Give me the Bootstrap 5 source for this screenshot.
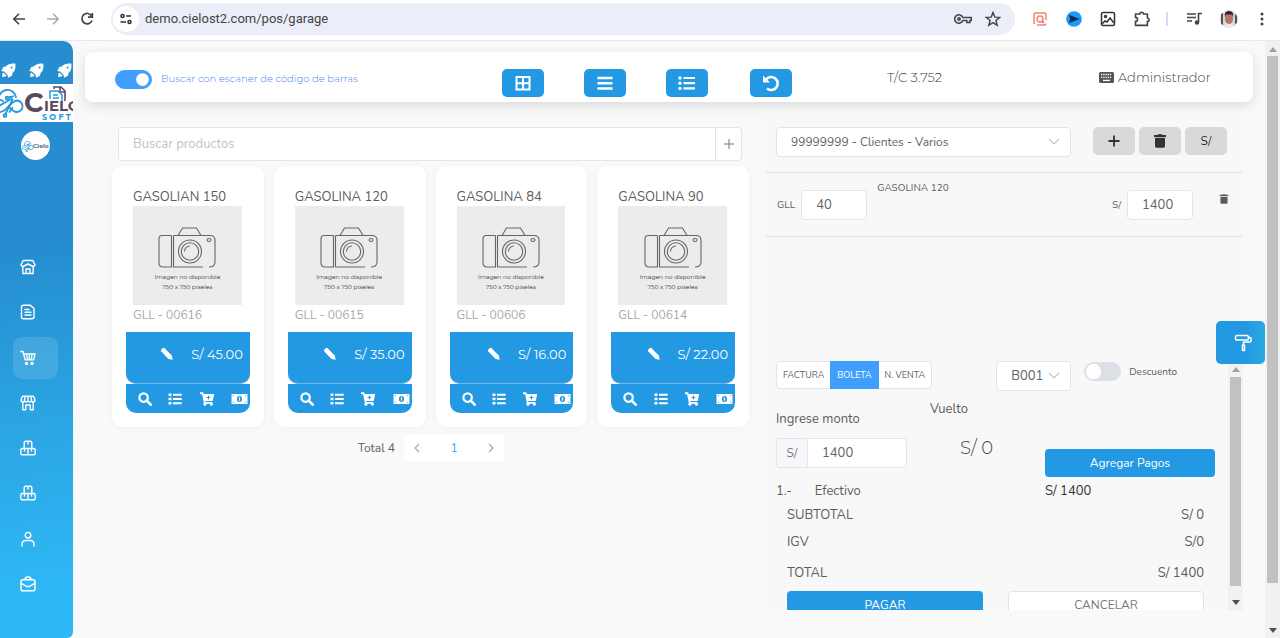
<!DOCTYPE html>
<html lang="es">
<head>
<meta charset="utf-8">
<meta name="viewport" content="width=device-width, initial-scale=1">
<title>POS Garage</title>
<link href="https://cdn.jsdelivr.net/npm/bootstrap@5.3.0/dist/css/bootstrap.min.css" rel="stylesheet">
<style>
:root{--blue:#2398e3;--line:#e2e4e9;--ink:#606266;--geo:Montserrat,Inter,sans-serif}
body{font-family:Nunito,"Open Sans",sans-serif;font-size:13px;line-height:18px;color:#5c5c5c;background:#f9f9f9;height:100vh;overflow:hidden}
svg{display:block;flex:none}
button{font-family:inherit}
.i16{width:16px;height:16px}.i14{width:14px;height:14px}
.line-ic{fill:none;stroke:currentColor;stroke-width:1.4;stroke-linecap:round;stroke-linejoin:round}
.plain{border:0;background:none;padding:0;color:inherit;display:flex;align-items:center;justify-content:center}

/* browser bar */
.chrome-bar{height:41px;padding:3px 12px 6px 12px;border-bottom:1px solid #e9e9e9;background:#fff;color:#444}
.nav-keys{width:99px;gap:20px}
.omni{background:#ebeef8;border-radius:16px;height:32px;padding:0 14px 0 2px}
.site-info{width:26px;height:26px;border-radius:50%;background:#fff}
.omni input{border:0;background:none;font:13px/18px Roboto,sans-serif;color:#444;outline:0;padding:0;min-width:0;margin-left:6px}
.omni .fav{margin-left:13px}
.ext{gap:14px;padding-left:17px}
.ext-sep{width:2px;height:14px;margin-left:2px;background:#cfdcf8}
.ext .face{margin-left:4px}
.ext .dots{margin:0 4px 0 8px}

/* sidebar */
.side{width:73px;overflow:hidden;border-top-right-radius:10px;border-bottom-right-radius:6px;color:#fff;background:linear-gradient(172deg,#258dd0 0%,#258dd0 35%,#2ba5e3 64%,#2fb8f6 92%);flex:none}
.rockets{height:43px;gap:13px;padding-top:15px}
.rockets svg{width:15px;height:15px}
.brand{height:38px;background:#fff;overflow:hidden}
.brand text,.avatar-mini text{font-family:Montserrat,Inter,sans-serif;font-weight:700}
.avatar-mini{width:29px;height:29px;border-radius:50%;background:#fff;margin:9px 0 0 21px}
.side-nav{margin:86px 15px 33px 13px}
.side-nav a{height:42px;border-radius:9px;padding-left:7px;color:#fff;display:flex;align-items:center}
.side-nav a.active{background:rgba(255,255,255,.13)}

/* header card */
.top-card{height:50px;margin:11px 12px 0 12px;padding:0 30px;background:#fff;border-radius:8px;box-shadow:0 4px 12px rgba(0,0,0,.12);display:grid;grid-template-columns:387fr 82fr 82fr 84fr 137fr 212fr 124fr;align-items:center;font-family:var(--geo);font-weight:300}
.top-card .tool{width:42px;height:28px;margin-top:11px;border-radius:5px;background:var(--blue);color:#fff}
.top-text{font-size:13px;white-space:nowrap;color:#444}
.sw.form-check-input{width:37px;height:19px;margin:0;border-color:#dcdfe6;background-color:#dcdfe6;--bs-form-switch-bg:url("data:image/svg+xml,%3csvg xmlns='http://www.w3.org/2000/svg' viewBox='-4 -4 8 8'%3e%3ccircle r='3.6' fill='%23fff'/%3e%3c/svg%3e");flex:none;float:none;box-shadow:none}
.sw.form-check-input:checked{background-color:#409eff;border-color:#409eff}
.scan{font-size:10px;color:#4f86f0;white-space:nowrap;padding-left:1px}

/* work area */
.work{display:grid;grid-template-columns:637fr 478fr;gap:16px;padding:9px 22px 0 39px}
.finder{height:34px;margin:16px 7px 5px 6px;border:1px solid var(--line);border-radius:4px;background:#fff;overflow:hidden}
.finder input{border:0;outline:0;padding:0 14px;font-size:13px;color:#555;min-width:0}
.finder input::placeholder{color:#bfc2c9}
.finder button{width:26px;color:#777}
.goods{display:grid;grid-template-columns:repeat(4,1fr);gap:10px}
.good{background:#fff;border-radius:10px;padding:22px 14px 14px;box-shadow:0 1px 6px rgba(0,0,0,.04)}
.good h2{font-size:13px;line-height:18px;font-weight:400;margin:0 0 0 7px;white-space:nowrap}
.photo{height:99px;margin:0 8px 0 7px;background:#ececec;padding-top:20px;color:#333}
.photo svg{width:58px;height:43px;margin:0 auto}
.photo figcaption{font:400 6px/10px var(--geo);text-align:center;padding-top:3px;white-space:nowrap}
.sku{font-size:12px;line-height:18px;color:#a8a8a8;margin:1px 0 8px 7px}
.price{height:52px;background:var(--blue);border-radius:0 0 10px 10px;color:#fff;padding:0 7px 8px 0;gap:17px;font:400 13px/18px var(--geo);border-bottom:1px solid #6db9eb}
.acts{height:29px;background:var(--blue);border-radius:0 0 10px 10px;color:#fff;padding:0 2px 0 12px}
.pager{margin-top:8px;padding-right:245px;font-size:12px;color:var(--ink)}
.pager .pages{background:#fff;height:26px;width:100px;margin-left:9px}
.pager a{text-decoration:none;color:#409eff}
.pager button{color:#b0b3ba;width:26px;height:26px}

/* sale panel */
.sale{background:#f8f8f8;color:#5c5c5c}
.box{background:#fff;border:1px solid var(--line);border-radius:4px;color:var(--ink);height:30px;font-size:13px;outline:0;padding:0 14px}
select.box{appearance:none;background:#fff url("data:image/svg+xml,%3csvg xmlns='http://www.w3.org/2000/svg' width='12' height='8'%3e%3cpath d='M1 1l5 5 5-5' fill='none' stroke='%23c0c4cc' stroke-width='1.2'/%3e%3c/svg%3e") no-repeat right 10px center}
.customer{padding:16px 16px 15px 11px;border-bottom:1px solid #dfdfdf}
.customer select{font-size:12px;margin-right:18px}
.customer button{height:28px;width:42px;border-radius:5px;background:#d9d9d9;color:#333;font-size:12px}
.item{height:64px;padding:0 14px 0 12px;border-bottom:1px solid #dfdfdf;font-size:10px}
.item label{margin-right:6px}
.item .box{width:66px}
.item .name{align-self:flex-start;padding-top:6px;margin-left:10px}
.item .drop{margin:0 0 12px 26px}
.pay{height:249px;margin-top:124px;overflow:hidden}
.pay-body{padding-left:11px;min-width:0}
.docs .btn{height:28px;border:1px solid var(--line);border-radius:4px;background:#fff;color:var(--ink);font-size:9px;line-height:26px;padding:0 6px}
.docs .btn-check:checked+.btn{background:#409eff;border-color:#409eff;color:#fff}
.serie{width:75px}
.desc{margin:1px 51px 0 13px;font-size:10px}
.cash{display:grid;grid-template-columns:154fr 115fr 170fr;margin-right:13px}
.cash-label{display:block;margin:19px 0 10px}
.prefix{width:31px;height:30px;border:1px solid var(--line);border-right:0;border-radius:4px 0 0 4px;background:#f5f7fa;font-size:12px;color:#777}
.cash .box{width:100px;border-radius:0 4px 4px 0}
.vuelto{padding-top:9px}
.change{font-family:var(--geo);font-weight:300;font-size:18px;line-height:24px;margin-top:18px;padding-left:30px;color:#444}
.solid{background:var(--blue);color:#fff;border-radius:4px;font-size:12px}
.add{height:28px;margin-top:58px}
.paid{margin-top:5px}
.paid span{margin-left:23px}
.total-paid{color:#333}
.sums{margin:0 24px 0 11px}
.sub{margin-top:6px}.igv{margin-top:9px}.tot{margin:13px 0 9px}
.sums .solid,.sums .cancel{height:28px;width:47%}
.sums .cancel{background:#fff;border:1px solid var(--line);border-radius:4px;font-size:12px;color:#777}
.sbar{background:#f1f1f1;width:15px;flex:none;padding:6px 1px 5px}
.sbar i{width:11px;background:#c1c1c1;display:block}
.tri{width:0;height:0;border:4px solid transparent;border-top:0;border-bottom:5px solid #a0a0a0}
.tri.down{border-top:5px solid #505050;border-bottom:0}
.inner .tri.down{margin-top:14px}.inner i{margin-top:5px}
.outer i{margin-top:4px;height:90%}
.paint{position:absolute;right:0;top:280px;width:49px;height:43px;border-radius:5px;background:linear-gradient(90deg,#2398e3 60%,#2ba9e0);color:#fff;padding-left:4px}
</style>
</head>
<body class="d-flex flex-column">
<svg width="0" height="0" class="position-absolute" aria-hidden="true">
<symbol id="rocket" viewBox="0 0 16 16"><path fill="currentColor" d="M15.300.700C11 .2 7.500 1 5.500 3.500L2.500 4.200.300 8.500l3 .5 3.700 3.700.5 3 4.200-2.200.8-3C15 8.500 15.800 5 15.300.700zM2.500 10 1.500 11.500l-.3 3.300 3.300-.3L6 13.500z"/><circle cx="11.300" cy="4.700" r="1.100" fill="#258dd0"/></symbol>
<symbol id="cloud" viewBox="-6 0 32 32"><g fill="none" stroke="#2498dc" stroke-width="1.800" stroke-linecap="round"><path d="M-1 14A8.500 8.500 0 1 1 16 11"/><path d="M3 15A6 6 0 1 0 3 25C7 24 11 15 17 14.500A5.700 5.700 0 1 1 16.500 26C13 26 11 23 9 21"/><path d="M-1 20 11 13M12.500 13.500 5.500 28M8.500 11.500l4.500-1M9.500 26l3-4"/><circle cx="5" cy="29.500" r="1.400"/><circle cx="7" cy="12" r="1.400"/></g></symbol>
<symbol id="camera" viewBox="0 0 58 43"><g fill="none" stroke="#666" stroke-width="1.100"><path d="M13.500 9.500H4Q1 9.500 1 13v24q0 4 4 4h8.500V9.500M15.500 9.500V41H45M15.500 9.500H52q5 0 5 5V36q0 5-6 5M20 9.500 24.500 2h14L43 9.500"/><circle cx="32" cy="25.500" r="11.500"/><circle cx="32" cy="25.500" r="8.700"/><path d="M26.500 25.500a5.500 5.500 0 0 1 5.500-5.500"/><ellipse cx="51" cy="14" rx="2" ry="1.500"/></g></symbol>
<symbol id="pencil" viewBox="0 0 14 14"><path fill="currentColor" d="M1.400 2.500 2.700 1.200q1-.8 1.900.1l7.200 7.300.9 4.200-4.200-.9L1.300 4.500q-.9-1 .1-2z"/></symbol>
<symbol id="search" viewBox="0 0 14 14"><circle cx="5.600" cy="5.600" r="4.200" fill="none" stroke="currentColor" stroke-width="2.200"/><path d="m8.700 8.700 4 4" stroke="currentColor" stroke-width="2.600" stroke-linecap="round"/></symbol>
<symbol id="list" viewBox="0 0 14 14"><path fill="currentColor" d="M.5 1.500h3v2.500h-3zM.5 5.800h3v2.500h-3zM.5 10h3v2.500h-3zM5 1.800h8.700v1.900H5zM5 6.100h8.700V8H5zM5 10.300h8.700v1.900H5z"/></symbol>
<symbol id="cartplus" viewBox="0 0 16 14"><path fill="currentColor" d="M1 .3h3.200l.5 1.700H15.200L13.700 9H6.200l.2 1.100h7v1a1.500 1.500 0 1 1-2.400.7H7.500A1.600 1.600 0 1 1 4.900 11L3.100 2.300H1z"/><path d="M9.500 3.600v3.800M7.600 5.500h3.800" stroke="#2398e3" stroke-width="1"/></symbol>
<symbol id="money" viewBox="0 0 17 12"><path fill="currentColor" d="M.5 1h16v10H.5z"/><ellipse cx="8.500" cy="6" rx="2.600" ry="3" fill="#2398e3"/><path d="M8.500 4.300v3.400" stroke="#fff" stroke-width="1.200"/><path fill="#2398e3" d="M1.800 2.300h1v1h-1zM14.200 2.300h1v1h-1zM1.800 8.700h1v1h-1zM14.200 8.700h1v1h-1z"/></symbol>
<symbol id="trash" viewBox="0 0 14 14"><path fill="currentColor" d="M5 .2h4l.6.900H13v1.800H1V1.100h3.400zM2 3.800h10V12q0 1.700-1.500 1.700h-7Q2 13.700 2 12z"/></symbol>
<symbol id="boxes" viewBox="0 0 16 16"><path d="M2.200 8.500H8v6.300H2.200q-1.400 0-1.400-1.400V9.900q0-1.400 1.400-1.400zM8 8.500h5.800q1.400 0 1.400 1.400v3.500q0 1.400-1.400 1.400H8zM4.200 8.300V2.600q0-1.400 1.400-1.400h4.800q1.400 0 1.400 1.400v5.700M8 1.500V4M4.500 8.700V11M11.500 8.700V11"/></symbol>
</svg>

<header class="chrome-bar d-flex align-items-start">
  <div class="nav-keys d-flex align-items-center h-100 flex-shrink-0">
    <button class="plain" aria-label="Atrás"><svg class="i14" viewBox="0 0 14 14"><path d="M13 7H2M7 1.800 1.800 7 7 12.200" fill="none" stroke="#444" stroke-width="1.600"/></svg></button>
    <button class="plain" aria-label="Adelante"><svg class="i14" viewBox="0 0 14 14"><path d="M1 7h11M7 1.800 12.200 7 7 12.200" fill="none" stroke="#aaa" stroke-width="1.600"/></svg></button>
    <button class="plain" aria-label="Recargar"><svg class="i14" viewBox="0 0 14 14"><path d="M12 8.500A5.200 5.200 0 1 1 11.600 4M12.300 1v4.200H8" fill="none" stroke="#444" stroke-width="1.700"/></svg></button>
  </div>
  <div class="omni d-flex align-items-center flex-grow-1">
    <span class="site-info d-flex align-items-center justify-content-center"><svg class="i14" viewBox="0 0 14 14" fill="none" stroke="#333" stroke-width="1.600"><circle cx="3.500" cy="4" r="1.500"/><path d="M7 4h5M1.500 10H7"/><circle cx="10.500" cy="10" r="1.500"/></svg></span>
    <input class="flex-grow-1" type="text" value="demo.cielost2.com/pos/garage" aria-label="Dirección">
    <svg width="18" height="12" viewBox="0 0 18 12" fill="none" stroke="#444" stroke-width="1.500"><path d="M8.800 4.500h8.500v3h-1.500v2h-3v-2h-4A4.200 4.200 0 1 1 8.800 4.500z"/><circle cx="5" cy="6" r="1.200"/></svg>
    <svg class="i16 fav" viewBox="0 0 16 16"><path d="m8 1.500 1.800 4.600 4.900.3-3.800 3.100 1.300 4.800L8 11.600l-4.200 2.700 1.300-4.800L1.300 6.400l4.900-.3z" fill="none" stroke="#444" stroke-width="1.400"/></svg>
  </div>
  <div class="ext d-flex align-items-center h-100">
    <svg class="i16 me-1" viewBox="0 0 16 16" fill="none" stroke="#f5836f" stroke-width="1.500"><path d="M2 13V3.500Q2 2 3.500 2h9Q14 2 14 3.500V9M5 14h7.500q1.500 0 1.500-1.500"/><circle cx="8" cy="8" r="3"/><path d="m10 10 2 2" stroke="#f05089"/></svg>
    <svg class="i16 me-1" viewBox="0 0 16 16"><circle cx="8" cy="8" r="7.800" fill="#199aff"/><path d="M3 3.700 13.500 8 3 12l1.200-4z" fill="#0d2c4b"/></svg>
    <svg class="i16 me-1" viewBox="0 0 16 16" fill="none" stroke="#333" stroke-width="1.500"><rect x="1.500" y="1.500" width="13" height="13" rx="1.500"/><circle cx="5.500" cy="5.500" r="1"/><path d="m2 13 3-3 2 1 3-4 4 5"/></svg>
    <svg class="i16" viewBox="0 0 16 16" fill="none" stroke="#444" stroke-width="1.600"><path d="M1.500 3H6a1.700 1.700 0 0 1 3.400 0h4v4a1.700 1.700 0 0 1 0 3.400v4H1.500v-4a2 2 0 0 0 0-4z"/></svg>
    <span class="ext-sep"></span>
    <svg class="i16 ms-1" viewBox="0 0 16 16" fill="none" stroke="#444" stroke-width="1.600"><path d="M1 3h9M1 6.500h9M1 10h5M12.500 11V2.500H16"/><circle cx="11" cy="11.500" r="1.500" fill="#444"/></svg>
    <svg class="face" width="18" height="18" viewBox="0 0 18 18"><circle cx="9" cy="9" r="9" fill="#d3d8df"/><path d="M1 14V4l2-1v12zM15 14V4l2 2v7z" fill="#555"/><path d="M4.500 16.500Q9 20 13.500 16.500L12 13H6z" fill="#e9e9ef"/><ellipse cx="9" cy="8.500" rx="4" ry="5.500" fill="#b87563"/><path d="M4.800 7Q4 1 9 1t4.200 6L12 4.500H6z" fill="#2c2424"/></svg>
    <svg class="dots" width="4" height="14" viewBox="0 0 4 14" fill="#444"><circle cx="2" cy="2" r="1.500"/><circle cx="2" cy="7" r="1.500"/><circle cx="2" cy="12" r="1.500"/></svg>
  </div>
</header>

<div class="d-flex flex-grow-1 overflow-hidden">
  <aside class="side d-flex flex-column">
    <div class="rockets d-flex align-items-center justify-content-center flex-shrink-0">
      <svg><use href="#rocket"/></svg><svg><use href="#rocket"/></svg><svg><use href="#rocket"/></svg>
    </div>
    <div class="brand flex-shrink-0">
      <svg width="90" height="38" viewBox="0 0 90 38" role="img" aria-label="Cielo Soft"><svg x="-6" y="2" width="32" height="32"><use href="#cloud"/></svg><path d="M54 5V3h7l4 4v10M60 3v5h5" fill="none" stroke="#5b4a5e" stroke-width="1.600"/><path d="M50 15V7h8l4 4v7M53 11h5M53 14h6" fill="none" stroke="#2498dc" stroke-width="1.500"/><text x="24" y="28" font-size="27" fill="#5b4a5e">C</text><text x="44" y="27" font-size="15" fill="#5b4a5e">IELO</text><text x="42" y="36" font-size="8" fill="#2498dc">S O F T</text></svg>
    </div>
    <div class="avatar-mini flex-shrink-0"><svg width="29" height="29" viewBox="0 0 29 29"><svg x="1" y="9" width="13" height="12"><use href="#cloud"/></svg><text x="12" y="17" font-size="6" fill="#5b6a7e">Cielo</text></svg></div>
    <nav class="side-nav d-flex flex-column justify-content-between flex-grow-1">
      <a href="#" aria-label="Inicio"><svg class="i16 line-ic" viewBox="0 0 16 16"><path d="M3.200 1.500h9.600L15 6q-.5 1.500-2 1.500L8 5 3 7.500Q1.500 7.500 1 6zM2.800 7.800v6.700h10.400V7.800M6 14.500V10h4v4.500"/></svg></a>
      <a href="#" aria-label="Documentos"><svg class="i16 line-ic" viewBox="0 0 16 16"><path d="M3.500 1.200h6.800L14 4.500v8.300q0 2-2 2H3.500q-2 0-2-2V3.200q0-2 2-2zM5 5.500h4M5 8.200h6M5 11h6"/></svg></a>
      <a href="#" class="active" aria-label="Ventas"><svg class="i16 line-ic" viewBox="0 0 16 16"><path d="M.8 1.500H3l2.200 8.300h8.300L15 4H3.900M6.800 5.500l.4 3M9.300 5.500v3M11.800 5.500l-.4 3"/><circle cx="6.500" cy="13.500" r="1"/><circle cx="12" cy="13.500" r="1"/></svg></a>
      <a href="#" aria-label="Tienda"><svg class="i16 line-ic" viewBox="0 0 16 16"><path d="M2.500 1.200h11L15 5q0 2-1.800 2-1.500 0-1.700-1.700Q11 7 9.500 7 8.200 7 8 5.500 7.800 7 6.500 7 5 7 4.500 5.300 4.300 7 2.800 7 1 7 1 5zM5 1.500l-.5 3.700M8 1.500v3.700M11 1.500l.5 3.700M2.800 7.200v7.600h3V10h4.400v4.800h3V7.200"/></svg></a>
      <a href="#" aria-label="Productos"><svg class="i16 line-ic"><use href="#boxes"/></svg></a>
      <a href="#" aria-label="Inventario"><svg class="i16 line-ic"><use href="#boxes"/></svg></a>
      <a href="#" aria-label="Usuarios"><svg class="i16 line-ic" viewBox="0 0 16 16"><circle cx="8" cy="4.200" r="2.800"/><path d="M2 15v-1.500q0-4 4-4h4q4 0 4 4V15"/></svg></a>
      <a href="#" aria-label="Caja"><svg class="i16 line-ic" viewBox="0 0 16 16"><path d="M2.800 3.700h10.400q1.800 0 1.800 1.800v7.700q0 1.600-1.600 1.600H2.600Q1 14.800 1 13.200V5.500q0-1.800 1.800-1.800zM5 3.600Q5 1 8 1t3 2.600M1.200 7.200 6.500 10.500h3l5.300-3.300"/></svg></a>
    </nav>
  </aside>

  <main class="flex-grow-1 position-relative overflow-hidden">
    <section class="top-card">
      <div class="form-switch d-flex align-items-center p-0 m-0 gap-2 pt-1">
        <input class="form-check-input sw" type="checkbox" role="switch" id="scan" checked>
        <label class="scan" for="scan">Buscar con escaner de código de barras</label>
      </div>
      <button class="plain tool" aria-label="Cuadrícula"><svg class="i16" viewBox="0 0 16 16" fill="none" stroke="#fff" stroke-width="2"><path d="M1.500 2h13v12.500h-13zM8 2v12.500M1.500 8.200h13"/></svg></button>
      <button class="plain tool" aria-label="Lista"><svg class="i16" viewBox="0 0 16 16"><path d="M.5 3h15M.5 8.200h15M.5 13.400h15" stroke="#fff" stroke-width="2.500"/></svg></button>
      <button class="plain tool" aria-label="Detalle"><svg width="18" height="16" viewBox="0 0 18 16" fill="#fff"><circle cx="2" cy="3" r="1.700"/><circle cx="2" cy="8.200" r="1.700"/><circle cx="2" cy="13.400" r="1.700"/><path d="M5.500 1.900H17v2.200H5.500zM5.500 7.100H17v2.200H5.500zM5.500 12.300H17v2.200H5.500z"/></svg></button>
      <button class="plain tool" aria-label="Deshacer"><svg width="18" height="18" viewBox="0 0 18 18"><path d="M4 5.500A6.500 6.500 0 1 1 5 14.500" fill="none" stroke="#fff" stroke-width="2.600"/><path d="M1 1.500v7h7z" fill="#fff"/></svg></button>
      <span class="top-text">T/C 3.752</span>
      <span class="top-text d-flex align-items-center gap-1"><svg width="15" height="11" viewBox="0 0 15 11"><rect width="15" height="11" rx="1.500" fill="#555"/><path d="M2 2.500h11M2 5.300h11" stroke="#fff" stroke-width="1.300" stroke-dasharray="1.300 .9"/><path d="M4 8.400h7" stroke="#fff" stroke-width="1.300"/></svg>Administrador</span>
    </section>

    <div class="work">
      <section>
        <div class="finder d-flex">
          <input class="flex-grow-1" type="text" placeholder="Buscar productos" aria-label="Buscar productos">
          <button class="plain border-start" aria-label="Agregar producto"><svg class="i14" viewBox="0 0 14 14"><path d="M7 2v10M2 7h10" stroke="#777" stroke-width="1"/></svg></button>
        </div>
        <div class="goods">
          <article class="good">
            <h2>GASOLIAN 150</h2>
            <figure class="photo"><svg><use href="#camera"/></svg><figcaption>Imagen no disponible<br>750 x 750 píxeles</figcaption></figure>
            <div class="sku">GLL - 00616</div>
            <div class="price d-flex align-items-center justify-content-end"><button class="plain" aria-label="Editar precio"><svg class="i14"><use href="#pencil"/></svg></button><span>S/ 45.00</span></div>
            <div class="acts d-flex align-items-center justify-content-between"><button class="plain" aria-label="Ver"><svg class="i14"><use href="#search"/></svg></button><button class="plain" aria-label="Detalle"><svg class="i14"><use href="#list"/></svg></button><button class="plain" aria-label="Agregar"><svg width="16" height="14"><use href="#cartplus"/></svg></button><button class="plain" aria-label="Precios"><svg width="17" height="12"><use href="#money"/></svg></button></div>
          </article>
          <article class="good">
            <h2>GASOLINA 120</h2>
            <figure class="photo"><svg><use href="#camera"/></svg><figcaption>Imagen no disponible<br>750 x 750 píxeles</figcaption></figure>
            <div class="sku">GLL - 00615</div>
            <div class="price d-flex align-items-center justify-content-end"><button class="plain" aria-label="Editar precio"><svg class="i14"><use href="#pencil"/></svg></button><span>S/ 35.00</span></div>
            <div class="acts d-flex align-items-center justify-content-between"><button class="plain" aria-label="Ver"><svg class="i14"><use href="#search"/></svg></button><button class="plain" aria-label="Detalle"><svg class="i14"><use href="#list"/></svg></button><button class="plain" aria-label="Agregar"><svg width="16" height="14"><use href="#cartplus"/></svg></button><button class="plain" aria-label="Precios"><svg width="17" height="12"><use href="#money"/></svg></button></div>
          </article>
          <article class="good">
            <h2>GASOLINA 84</h2>
            <figure class="photo"><svg><use href="#camera"/></svg><figcaption>Imagen no disponible<br>750 x 750 píxeles</figcaption></figure>
            <div class="sku">GLL - 00606</div>
            <div class="price d-flex align-items-center justify-content-end"><button class="plain" aria-label="Editar precio"><svg class="i14"><use href="#pencil"/></svg></button><span>S/ 16.00</span></div>
            <div class="acts d-flex align-items-center justify-content-between"><button class="plain" aria-label="Ver"><svg class="i14"><use href="#search"/></svg></button><button class="plain" aria-label="Detalle"><svg class="i14"><use href="#list"/></svg></button><button class="plain" aria-label="Agregar"><svg width="16" height="14"><use href="#cartplus"/></svg></button><button class="plain" aria-label="Precios"><svg width="17" height="12"><use href="#money"/></svg></button></div>
          </article>
          <article class="good">
            <h2>GASOLINA 90</h2>
            <figure class="photo"><svg><use href="#camera"/></svg><figcaption>Imagen no disponible<br>750 x 750 píxeles</figcaption></figure>
            <div class="sku">GLL - 00614</div>
            <div class="price d-flex align-items-center justify-content-end"><button class="plain" aria-label="Editar precio"><svg class="i14"><use href="#pencil"/></svg></button><span>S/ 22.00</span></div>
            <div class="acts d-flex align-items-center justify-content-between"><button class="plain" aria-label="Ver"><svg class="i14"><use href="#search"/></svg></button><button class="plain" aria-label="Detalle"><svg class="i14"><use href="#list"/></svg></button><button class="plain" aria-label="Agregar"><svg width="16" height="14"><use href="#cartplus"/></svg></button><button class="plain" aria-label="Precios"><svg width="17" height="12"><use href="#money"/></svg></button></div>
          </article>
        </div>
        <nav class="pager d-flex align-items-center justify-content-end" aria-label="Páginas">
          <span>Total 4</span>
          <div class="pages d-flex align-items-center justify-content-between">
            <button class="plain" aria-label="Anterior"><svg width="8" height="10" viewBox="0 0 8 10"><path d="M6 1 2 5l4 4" fill="none" stroke="currentColor" stroke-width="1.500"/></svg></button>
            <a href="#">1</a>
            <button class="plain" aria-label="Siguiente"><svg width="8" height="10" viewBox="0 0 8 10"><path d="m2 1 4 4-4 4" fill="none" stroke="currentColor" stroke-width="1.500"/></svg></button>
          </div>
        </nav>
      </section>

      <section class="sale">
        <div class="customer d-flex gap-1">
          <select class="box flex-grow-1" aria-label="Cliente"><option>99999999 - Clientes - Varios</option></select>
          <button class="plain" aria-label="Nuevo cliente"><svg class="i14" viewBox="0 0 14 14"><path d="M7 1.500v11M1.500 7h11" stroke="#333" stroke-width="1.800"/></svg></button>
          <button class="plain" aria-label="Vaciar"><svg class="i14"><use href="#trash"/></svg></button>
          <button class="plain">S/</button>
        </div>
        <div class="item d-flex align-items-center">
          <label for="qty">GLL</label>
          <input class="box" id="qty" type="text" value="40">
          <span class="name">GASOLINA 120</span>
          <label for="amount" class="ms-auto">S/</label>
          <input class="box" id="amount" type="text" value="1400">
          <button class="plain drop" aria-label="Quitar"><svg width="10" height="10"><use href="#trash"/></svg></button>
        </div>
        <div class="pay d-flex">
          <div class="pay-body flex-grow-1">
            <div class="d-flex align-items-start">
              <div class="docs btn-group" role="group" aria-label="Comprobante">
                <input class="btn-check" type="radio" name="doc" id="d1"><label class="btn" for="d1">FACTURA</label>
                <input class="btn-check" type="radio" name="doc" id="d2" checked><label class="btn" for="d2">BOLETA</label>
                <input class="btn-check" type="radio" name="doc" id="d3"><label class="btn" for="d3">N. VENTA</label>
              </div>
              <select class="box serie ms-auto" aria-label="Serie"><option>B001</option></select>
              <div class="form-switch desc d-flex align-items-center p-0 gap-2">
                <input class="form-check-input sw" type="checkbox" role="switch" id="disc"><label for="disc">Descuento</label>
              </div>
            </div>
            <div class="cash">
              <div>
                <label for="cashin" class="cash-label">Ingrese monto</label>
                <div class="d-flex"><span class="prefix d-flex align-items-center justify-content-center">S/</span><input class="box" id="cashin" type="text" value="1400"></div>
              </div>
              <div class="vuelto"><div>Vuelto</div><div class="change">S/ 0</div></div>
              <button class="plain solid add">Agregar Pagos</button>
              <div class="paid">1.-<span>Efectivo</span></div><div></div><div class="paid total-paid">S/ 1400</div>
            </div>
            <div class="sums">
              <div class="d-flex justify-content-between sub"><span>SUBTOTAL</span><span>S/ 0</span></div>
              <div class="d-flex justify-content-between igv"><span>IGV</span><span>S/0</span></div>
              <div class="d-flex justify-content-between tot"><span>TOTAL</span><span>S/ 1400</span></div>
              <div class="d-flex justify-content-between"><button class="plain solid">PAGAR</button><button class="plain cancel">CANCELAR</button></div>
            </div>
          </div>
          <div class="sbar d-flex flex-column align-items-center inner"><span class="tri"></span><i class="flex-grow-1"></i><span class="tri down"></span></div>
        </div>
      </section>
    </div>
    <button class="plain paint" aria-label="Tema"><svg width="18" height="18" viewBox="0 0 18 18" fill="none" stroke="#fff" stroke-width="1.500" stroke-linejoin="round"><rect x="1.500" y="1.500" width="13" height="4.500" rx="1.800"/><path d="M14.500 3.500H16q1 0 1 1V7q0 1-1 1H9.500v2.500"/><path d="M8.500 11h2v5.500h-2z"/></svg></button>
  </main>

  <div class="sbar d-flex flex-column align-items-center outer"><span class="tri"></span><i></i><span class="tri down mt-auto"></span></div>
</div>
<script src="https://cdn.jsdelivr.net/npm/bootstrap@5.3.0/dist/js/bootstrap.bundle.min.js"></script>
</body>
</html>
